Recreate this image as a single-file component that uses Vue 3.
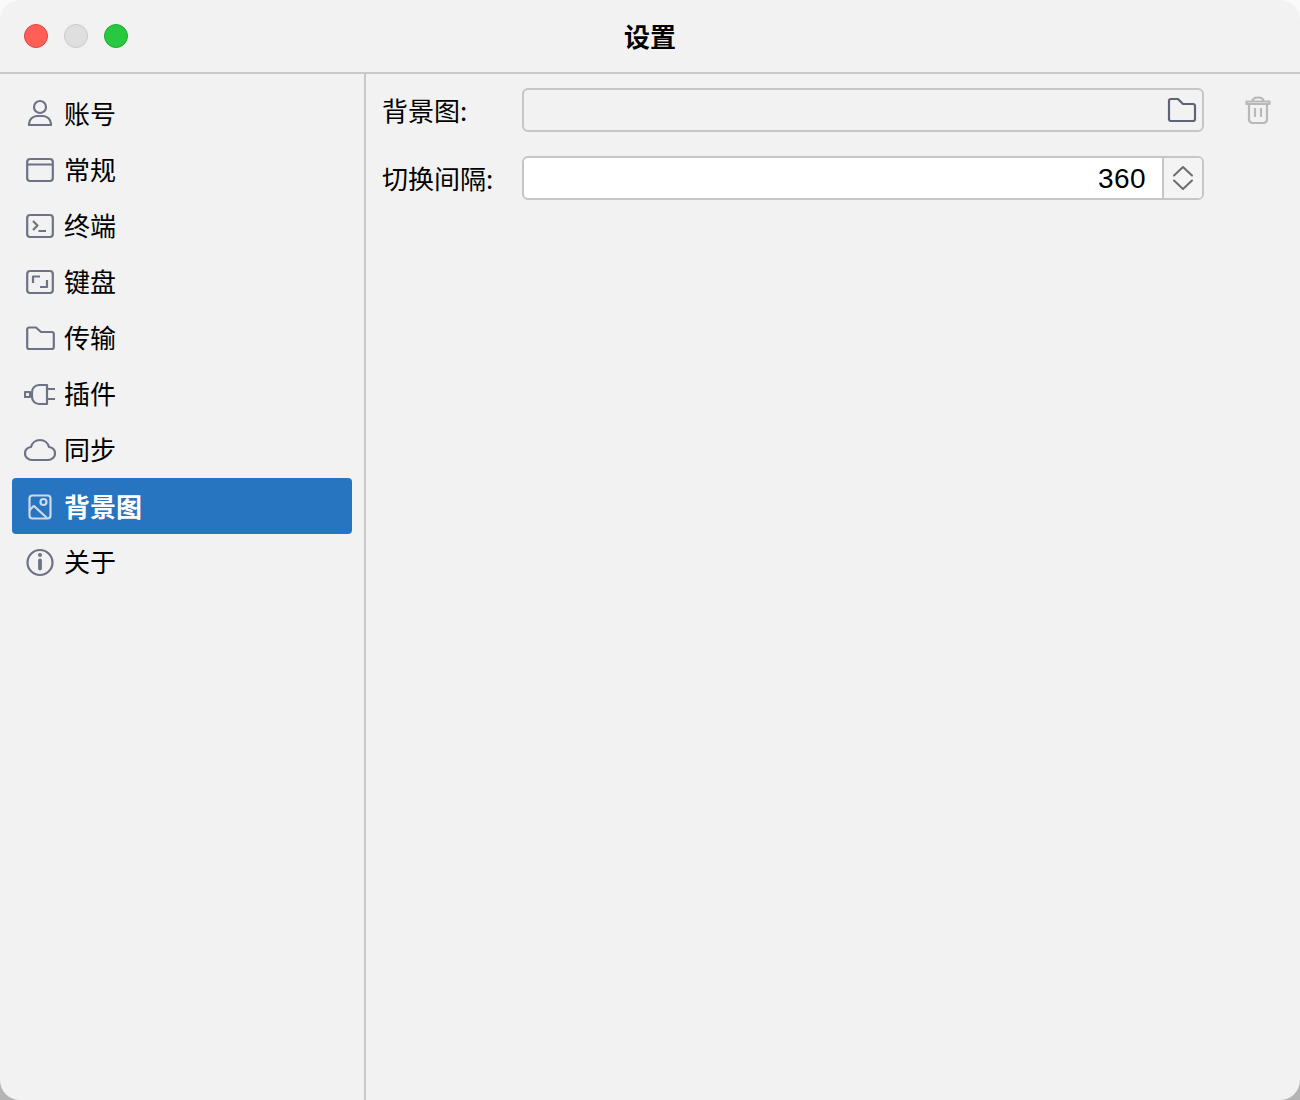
<script setup>
const items = [
  { id: 'user', label: '账号' },
  { id: 'window', label: '常规' },
  { id: 'terminal', label: '终端' },
  { id: 'keyboard', label: '键盘' },
  { id: 'folder', label: '传输' },
  { id: 'plug', label: '插件' },
  { id: 'cloud', label: '同步' },
  { id: 'image', label: '背景图', active: true },
  { id: 'info', label: '关于' },
]
</script>

<template>
  <div class="window">
    <header class="titlebar">
      <div class="lights">
        <span class="light red"></span>
        <span class="light gray"></span>
        <span class="light green"></span>
      </div>
      <div class="title">设置</div>
    </header>
    <div class="body">
      <aside class="sidebar">
        <div v-for="item in items" :key="item.id" class="item" :class="{ active: item.active }">
          <svg class="icon" viewBox="0 0 32 32" width="32" height="32" fill="none" stroke="currentColor" stroke-width="2.200" stroke-linejoin="round">
            <template v-if="item.id === 'user'">
              <circle cx="16" cy="9" r="6" />
              <path d="M5 27v-1c0-4.500 4-8 8-8h6c4 0 8 3.500 8 8v1z" />
            </template>
            <template v-else-if="item.id === 'window'">
              <rect x="3.200" y="5" width="25.600" height="22" rx="3" />
              <path d="M3.200 10.500h25.600" />
            </template>
            <template v-else-if="item.id === 'terminal'">
              <rect x="3.200" y="5" width="25.600" height="22" rx="3" />
              <path d="M9 11l4.500 4.500L9 20M14.500 21h7.500" />
            </template>
            <template v-else-if="item.id === 'keyboard'">
              <rect x="3.200" y="5" width="25.600" height="22" rx="3" />
              <path d="M9 17v-6.500h7M23 14v7h-7" />
            </template>
            <template v-else-if="item.id === 'folder'">
              <path d="M3.200 7.500a2 2 0 0 1 2-2h6.800l5 4.500h10.800a2 2 0 0 1 2 2V25a2 2 0 0 1-2 2H5.200a2 2 0 0 1-2-2z" />
            </template>
            <template v-else-if="item.id === 'plug'">
              <path d="M23 7H15C10.500 7 8 11 8 14v5c0 3 2.500 7 7 7h8z" />
              <path d="M23 11h8M23 21h8" />
              <rect x="1" y="14" width="5" height="5" />
              <path d="M6 16.500h2" />
            </template>
            <template v-else-if="item.id === 'cloud'">
              <path d="M8 26c-4 0-7-3-7-6.500 0-3.500 2.500-6 6-6.500 1-4 4.500-7 9-7 4.500 0 8 3 9 7 3.500.5 6 3 6 6.500S28 26 24 26z" />
            </template>
            <template v-else-if="item.id === 'image'">
              <rect x="5.500" y="5.500" width="21" height="23" rx="3" />
              <circle cx="19.500" cy="12" r="3" />
              <path d="M5.500 20.500C7.500 18 9 16.500 10 16L23 28" />
            </template>
            <template v-else>
              <circle cx="16" cy="16.500" r="12.500" />
              <circle cx="16" cy="9" r="2" fill="currentColor" stroke="none" />
              <path d="M16 14.500v8" stroke-width="3.800" stroke-linecap="round" />
            </template>
          </svg>
          <span class="label">{{ item.label }}</span>
        </div>
      </aside>
      <main class="content">
        <div class="row first">
          <label class="field-label">背景图:</label>
          <div class="input disabled">
            <svg class="folder" viewBox="0 0 30 26" width="30" height="26" fill="none" stroke="currentColor" stroke-width="2.200" stroke-linejoin="round">
              <path d="M2 4a2 2 0 0 1 2-2h7l5 5h10a2 2 0 0 1 2 2v13a2 2 0 0 1-2 2H4a2 2 0 0 1-2-2z" />
            </svg>
          </div>
          <svg class="trash" viewBox="0 0 26 28" width="26" height="28" fill="none" stroke="currentColor" stroke-width="2.200" stroke-linejoin="round">
            <path d="M1.500 5.500h23v2.500h-23zM7.500 5.500C7.500 2.500 9.500 1.500 13 1.500s5.500 1 5.500 4M4 8v15a4 4 0 0 0 3 4h12a4 4 0 0 0 3-4V8M10 12v9M16 12v9" />
          </svg>
        </div>
        <div class="row">
          <label class="field-label">切换间隔:</label>
          <div class="input number">
            <span class="value">360</span>
            <div class="spinner">
              <svg viewBox="0 0 20 26" width="20" height="26" fill="none" stroke="currentColor" stroke-width="2" stroke-linecap="round" stroke-linejoin="round">
                <path d="M1 10.500l9-8.500 9 8.500M1 15.500l9 8.500 9-8.500" />
              </svg>
            </div>
          </div>
        </div>
      </main>
    </div>
  </div>
</template>

<style>
html, body { margin: 0; }
body { background: linear-gradient(#fafafa 0 50%, #b4b4b4 50% 100%); }
</style>

<style scoped>
.window {
  width: 1300px;
  height: 1100px;
  background: #f2f2f2;
  border-radius: 20px;
  overflow: hidden;
  display: flex;
  flex-direction: column;
  font-family: "Noto Sans CJK SC", "Liberation Sans", sans-serif;
  color: #000;
}
.titlebar {
  height: 72px;
  border-bottom: 2px solid #c8c8c8;
  display: flex;
  align-items: center;
  justify-content: center;
  position: relative;
  flex: none;
}
.lights {
  position: absolute;
  left: 24px;
  top: 24px;
  display: flex;
  gap: 16px;
}
.light {
  width: 24px;
  height: 24px;
  border-radius: 50%;
  box-sizing: border-box;
  border: 1px solid;
}
.red { background: #ff5f57; border-color: #e0443e; }
.gray { background: #dfdfdf; border-color: #c9c9c9; }
.green { background: #28c840; border-color: #1fab31; }
.title {
  font-size: 26px;
  font-weight: 700;
  line-height: 72px;
  color: #000;
}
.body {
  flex: 1;
  display: flex;
  min-height: 0;
}
.sidebar {
  flex: none;
  border-right: 2px solid #c8c8c8;
  padding: 12px 12px 0;
  box-sizing: border-box;
  width: 366px;
}
.item {
  height: 56px;
  display: flex;
  align-items: center;
  border-radius: 4px;
  padding-left: 12px;
  color: #6e7285;
}
.item.active {
  background: #2775c0;
  color: #cfd9e8;
}
.icon { flex: none; }
.label {
  margin-left: 8px;
  font-size: 26px;
  line-height: 54px;
  padding-bottom: 2px;
  color: #000;
}
.active .label {
  color: #fff;
  font-weight: 700;
  line-height: 56px;
  padding-bottom: 0;
}
.content {
  flex: 1;
  padding: 14px 16px 0;
}
.row {
  display: flex;
  align-items: center;
  height: 44px;
  margin-bottom: 24px;
}
.field-label {
  width: 140px;
  flex: none;
  font-size: 26px;
  line-height: 44px;
  color: #000;
}
.input {
  width: 682px;
  height: 44px;
  box-sizing: border-box;
  border: 2px solid #c6c6c6;
  border-radius: 6px;
  display: flex;
  align-items: center;
  justify-content: flex-end;
}
.disabled {
  background: #f2f2f2;
  padding-right: 5px;
  color: #5e6378;
}
.folder { flex: none; }
.trash {
  margin-left: 41px;
  flex: none;
  color: #b8b8b8;
}
.number {
  background: #fff;
  overflow: hidden;
}
.value {
  font-family: "Liberation Sans", sans-serif;
  font-size: 28px;
  line-height: 42px;
  padding-top: 2px;
  letter-spacing: 0.4px;
  color: #000;
  padding-right: 16px;
}
.spinner {
  width: 38px;
  height: 40px;
  border-left: 2px solid #c6c6c6;
  background: #f4f4f4;
  display: flex;
  align-items: center;
  justify-content: center;
  color: #6d6d6d;
  flex: none;
}
</style>
